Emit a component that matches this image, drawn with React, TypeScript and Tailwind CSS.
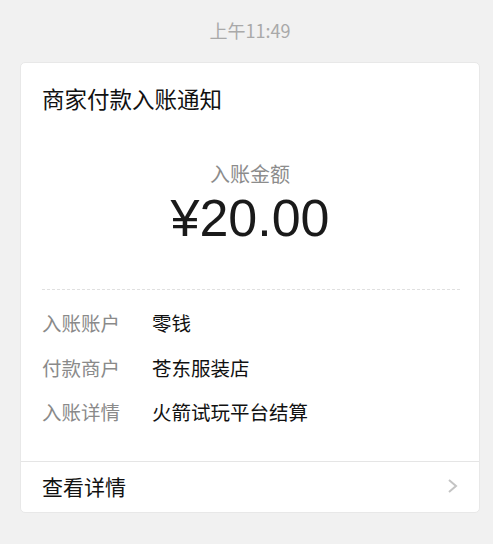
import React from "react";

const cjk = { fontFamily: '"Noto Sans CJK SC", "Noto Sans", sans-serif' };

export default function App() {
  const rows: [string, string][] = [
    ["入账账户", "零钱"],
    ["付款商户", "苍东服装店"],
    ["入账详情", "火箭试玩平台结算"],
  ];
  return (
    <div className="w-full h-[544px] bg-[#f1f1f1] overflow-hidden" style={cjk}>
      <div className="h-[62px] flex items-center justify-center pl-[7px]">
        <span className="text-[18px] leading-[24px] text-[#a9a9a9] -mt-[2px]">上午11:49</span>
      </div>
      <div className="ml-[20px] mr-[13px] bg-white rounded-[5px] border border-[#e8e8e8] flex flex-col">
        <div className="h-[69px] flex items-center pl-[21px]">
          <span className="text-[22.5px] leading-[30px] text-[#111]">商家付款入账通知</span>
        </div>
        <div className="mt-[28px] h-[28px] flex items-center justify-center">
          <span className="text-[20px] leading-[28px] text-[#8c8c8c]">入账金额</span>
        </div>
        <div className="h-[60px] flex items-center justify-center">
          <span
            className="text-[52px] leading-[60px] text-[#1a1a1a]"
            style={{ fontFamily: '"Liberation Sans", Arial, sans-serif' }}
          >
            ¥20.00
          </span>
        </div>
        <div className="mt-[41px] ml-[21px] mr-[19px] border-t border-dashed border-[#e0e0e0]" />
        <div className="pt-[11px] pb-[26px] flex flex-col">
          {rows.map(([k, v]) => (
            <div key={k} className="h-[44.5px] flex items-center pl-[21px]">
              <span className="w-[110px] text-[19.5px] leading-[28px] text-[#8a8a8a]">{k}</span>
              <span className="text-[19.5px] leading-[28px] text-[#111]">{v}</span>
            </div>
          ))}
        </div>
        <div className="h-[51px] border-t border-[#e5e5e5] flex items-center justify-between pl-[21px] pr-[20px]">
          <span className="text-[21px] leading-[28px] text-[#111] -mt-[2px]">查看详情</span>
          <svg width="12" height="16" viewBox="0 0 12 16" className="-mt-[2px]">
            <polyline points="2,2 9,8 2,14" fill="none" stroke="#c4c4c4" strokeWidth="2" />
          </svg>
        </div>
      </div>
    </div>
  );
}
